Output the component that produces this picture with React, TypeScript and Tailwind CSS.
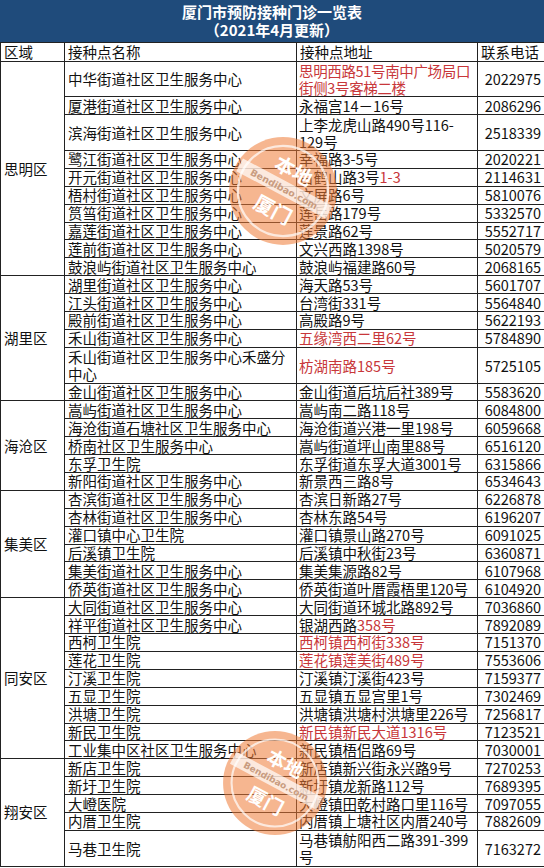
import React from "react";

type Row = { name: string; addr: React.ReactNode; tel: string; tall?: boolean };
type Group = { area: string; rows: Row[] };

const Red = ({ children }: { children: React.ReactNode }) => (
  <span className="text-[#c8373a]">{children}</span>
);

const groups: Group[] = [
  {
    area: "思明区",
    rows: [
      {
        name: "中华街道社区卫生服务中心",
        addr: <span className="tracking-[-0.35px]"><Red>思明西路51号南中广场局口街侧3号客梯二楼</Red></span>,
        tel: "2022975",
        tall: true,
      },
      { name: "厦港街道社区卫生服务中心", addr: "永福宫14－16号", tel: "2086296" },
      { name: "滨海街道社区卫生服务中心", addr: "上李龙虎山路490号116-129号", tel: "2518339", tall: true },
      { name: "鹭江街道社区卫生服务中心", addr: "幸福路3-5号", tel: "2020221" },
      { name: "开元街道社区卫生服务中心", addr: <>白鹤山路3号<Red>1-3</Red></>, tel: "2114631" },
      { name: "梧村街道社区卫生服务中心", addr: "文屏路6号", tel: "5810076" },
      { name: "筼筜街道社区卫生服务中心", addr: "莲岳路179号", tel: "5332570" },
      { name: "嘉莲街道社区卫生服务中心", addr: "莲景路62号", tel: "5552717" },
      { name: "莲前街道社区卫生服务中心", addr: "文兴西路1398号", tel: "5020579" },
      { name: "鼓浪屿街道社区卫生服务中心", addr: "鼓浪屿福建路60号", tel: "2068165" },
    ],
  },
  {
    area: "湖里区",
    rows: [
      { name: "湖里街道社区卫生服务中心", addr: "海天路53号", tel: "5601707" },
      { name: "江头街道社区卫生服务中心", addr: "台湾街331号", tel: "5564840" },
      { name: "殿前街道社区卫生服务中心", addr: "高殿路9号", tel: "5622193" },
      { name: "禾山街道社区卫生服务中心", addr: <Red>五缘湾西二里62号</Red>, tel: "5784890" },
      { name: "禾山街道社区卫生服务中心禾盛分中心", addr: <Red>枋湖南路185号</Red>, tel: "5725105", tall: true },
      { name: "金山街道社区卫生服务中心", addr: "金山街道后坑后社389号", tel: "5583620" },
    ],
  },
  {
    area: "海沧区",
    rows: [
      { name: "嵩屿街道社区卫生服务中心", addr: "嵩屿南二路118号", tel: "6084800" },
      { name: "海沧街道石塘社区卫生服务中心", addr: "海沧街道兴港一里198号", tel: "6059668" },
      { name: "桥南社区卫生服务中心", addr: "嵩屿街道坪山南里88号", tel: "6516120" },
      { name: "东孚卫生院", addr: "东孚街道东孚大道3001号", tel: "6315866" },
      { name: "新阳街道社区卫生服务中心", addr: "新景西三路8号", tel: "6534643" },
    ],
  },
  {
    area: "集美区",
    rows: [
      { name: "杏滨街道社区卫生服务中心", addr: "杏滨日新路27号", tel: "6226878" },
      { name: "杏林街道社区卫生服务中心", addr: "杏林东路54号", tel: "6196207" },
      { name: "灌口镇中心卫生院", addr: "灌口镇景山路270号", tel: "6091025" },
      { name: "后溪镇卫生院", addr: "后溪镇中秋街23号", tel: "6360871" },
      { name: "集美街道社区卫生服务中心", addr: "集美集源路82号", tel: "6107968" },
      { name: "侨英街道社区卫生服务中心", addr: "侨英街道叶厝霞梧里120号", tel: "6104920" },
    ],
  },
  {
    area: "同安区",
    rows: [
      { name: "大同街道社区卫生服务中心", addr: "大同街道环城北路892号", tel: "7036860" },
      { name: "祥平街道社区卫生服务中心", addr: <>银湖西路<Red>358号</Red></>, tel: "7892089" },
      { name: "西柯卫生院", addr: <Red>西柯镇西柯街338号</Red>, tel: "7151370" },
      { name: "莲花卫生院", addr: <Red>莲花镇莲美街489号</Red>, tel: "7553606" },
      { name: "汀溪卫生院", addr: "汀溪镇汀溪街423号", tel: "7159377" },
      { name: "五显卫生院", addr: "五显镇五显宫里1号", tel: "7302469" },
      { name: "洪塘卫生院", addr: "洪塘镇洪塘村洪塘里226号", tel: "7256817" },
      { name: "新民卫生院", addr: <Red>新民镇新民大道1316号</Red>, tel: "7123521" },
      { name: "工业集中区社区卫生服务中心", addr: "新民镇梧侣路69号", tel: "7030001" },
    ],
  },
  {
    area: "翔安区",
    rows: [
      { name: "新店卫生院", addr: "新店镇新兴街永兴路9号", tel: "7270253" },
      { name: "新圩卫生院", addr: "新圩镇龙新路112号", tel: "7689395" },
      { name: "大嶝医院", addr: "大嶝镇田乾村路口里116号", tel: "7097055" },
      { name: "内厝卫生院", addr: "内厝镇上塘社区内厝240号", tel: "7882609" },
      { name: "马巷卫生院", addr: "马巷镇舫阳西二路391-399号", tel: "7163272", tall: true },
    ],
  },
];

function Watermark({ className }: { className: string }) {
  return (
    <svg viewBox="0 0 100 100" className={className}>
      <circle cx="50" cy="50" r="49" fill="#ee7a35" opacity="0.55" />
      <circle cx="50" cy="50" r="41" fill="none" stroke="#fff" strokeWidth="2" opacity="0.7" />
      <g transform="rotate(28 50 50)">
        <rect x="4" y="41" width="92" height="13" fill="#fff" opacity="0.7" />
        <text x="50" y="36" textAnchor="middle" fontSize="18" fontWeight="700" fill="#fff" fontFamily="'Noto Sans CJK SC', sans-serif">
          本地
        </text>
        <text x="50" y="51" textAnchor="middle" fontSize="8.5" fontWeight="700" fill="#c99c80" fontFamily="'DejaVu Sans', sans-serif">
          Bendibao.com
        </text>
        <text x="50" y="76" textAnchor="middle" fontSize="18" fontWeight="700" fill="#fff" fontFamily="'Noto Sans CJK SC', sans-serif">
          厦门
        </text>
      </g>
    </svg>
  );
}

export default function App() {
  const cell = "border border-[#222] px-[3px] py-0 align-middle";
  return (
    <div className="relative w-[544px] h-[868px] overflow-hidden bg-white text-[14.5px] leading-[16px] text-[#111] font-['Noto_Sans_CJK_SC',sans-serif]">
      <div className="h-[43px] bg-[#1f4b7b] border-b border-[#222] pt-[3px] text-center text-white font-bold text-[15px] leading-[18px]">
        <div>厦门市预防接种门诊一览表</div>
        <div>（2021年4月更新）</div>
      </div>
      <table className="table-fixed w-[544px] border-collapse">
        <colgroup>
          <col className="w-[64px]" />
          <col className="w-[232px]" />
          <col className="w-[181px]" />
          <col className="w-[67px]" />
        </colgroup>
        <thead>
          <tr className="h-[18px]">
            <td className={cell + " border-t-0"}>区域</td>
            <td className={cell + " border-t-0"}>接种点名称</td>
            <td className={cell + " border-t-0"}>接种点地址</td>
            <td className={cell + " border-t-0 border-r-[#999]"}>联系电话</td>
          </tr>
        </thead>
        <tbody>
          {groups.flatMap((g) =>
            g.rows.map((r, i) => (
              <tr key={g.area + i} className={r.tall ? "h-[35.8px] leading-[17px]" : "h-[17.9px]"}>
                {i === 0 && (
                  <td rowSpan={g.rows.length} className={cell}>
                    {g.area}
                  </td>
                )}
                <td className={cell}>{r.name}</td>
                <td className={cell + " pl-[2px] pr-[1px]"}>{r.addr}</td>
                <td className={cell + " text-right px-[2px] border-r-[#999]"}>{r.tel}</td>
              </tr>
            ))
          )}
        </tbody>
      </table>
      <Watermark className="absolute left-[228px] top-[136px] w-[110px] h-[110px] pointer-events-none" />
      <Watermark className="absolute left-[222px] top-[730px] w-[106px] h-[106px] pointer-events-none" />
    </div>
  );
}
